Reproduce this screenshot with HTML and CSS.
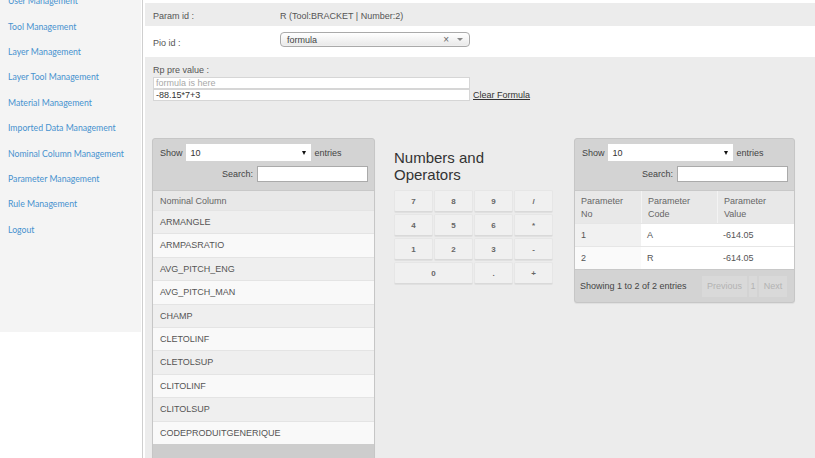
FILE: index.html
```html
<!DOCTYPE html>
<html>
<head>
<meta charset="utf-8">
<link rel="stylesheet" href="styles.css">
</head>
<body>
<div class="page">
  <aside class="sidebar">
    <ul class="nav">
      <li><a href="#">User Management</a></li>
      <li><a href="#">Tool Management</a></li>
      <li><a href="#">Layer Management</a></li>
      <li><a href="#">Layer Tool Management</a></li>
      <li><a href="#">Material Management</a></li>
      <li><a href="#">Imported Data Management</a></li>
      <li><a href="#">Nominal Column Management</a></li>
      <li><a href="#">Parameter Management</a></li>
      <li><a href="#">Rule Management</a></li>
      <li><a href="#">Logout</a></li>
    </ul>
  </aside>
  <main class="main">
    <div class="row-param">
      <span class="lbl">Param id :</span>
      <span>R (Tool:BRACKET | Number:2)</span>
    </div>
    <div class="row-pio">
      <span class="lbl pio-lbl">Pio id :</span>
      <div class="chosen">
        <span class="chosen-text">formula</span>
        <span class="chosen-x">×</span>
        <span class="chosen-arrow"></span>
      </div>
    </div>
    <div class="rp">
      <div class="rp-lbl">Rp pre value :</div>
      <div class="rp-input placeholder">formula is here</div>
      <div class="rp-line">
        <div class="rp-input">-88.15*7+3</div>
        <a href="#" class="clear">Clear Formula</a>
      </div>
    </div>
    <div class="cols">
      <section class="panel panel-left">
        <div class="dt-head">
          <div class="dt-len">
            <span>Show</span>
            <div class="dt-select"><span>10</span><span class="tri"></span></div>
            <span>entries</span>
          </div>
          <div class="dt-search">
            <span>Search:</span>
            <div class="dt-input"></div>
          </div>
        </div>
        <div class="nc-head">Nominal Column</div>
        <div class="nc-row odd">ARMANGLE</div>
        <div class="nc-row even">ARMPASRATIO</div>
        <div class="nc-row odd">AVG_PITCH_ENG</div>
        <div class="nc-row even">AVG_PITCH_MAN</div>
        <div class="nc-row odd">CHAMP</div>
        <div class="nc-row even">CLETOLINF</div>
        <div class="nc-row odd">CLETOLSUP</div>
        <div class="nc-row even">CLITOLINF</div>
        <div class="nc-row odd">CLITOLSUP</div>
        <div class="nc-row even">CODEPRODUITGENERIQUE</div>
        <div class="dt-foot"></div>
      </section>
      <section class="calc">
        <h2 class="calc-title">Numbers and<br>Operators</h2>
        <div class="keys">
          <button class="key">7</button>
          <button class="key">8</button>
          <button class="key">9</button>
          <button class="key">/</button>
          <button class="key">4</button>
          <button class="key">5</button>
          <button class="key">6</button>
          <button class="key">*</button>
          <button class="key">1</button>
          <button class="key">2</button>
          <button class="key">3</button>
          <button class="key">-</button>
          <button class="key wide">0</button>
          <button class="key">.</button>
          <button class="key">+</button>
        </div>
      </section>
      <section class="panel panel-right">
        <div class="dt-head">
          <div class="dt-len">
            <span>Show</span>
            <div class="dt-select"><span>10</span><span class="tri"></span></div>
            <span>entries</span>
          </div>
          <div class="dt-search">
            <span>Search:</span>
            <div class="dt-input"></div>
          </div>
        </div>
        <div class="pt-grid">
          <div class="pt-h">Parameter<br>No</div>
          <div class="pt-h">Parameter<br>Code</div>
          <div class="pt-h">Parameter<br>Value</div>
          <div class="pt-c sort">1</div>
          <div class="pt-c">A</div>
          <div class="pt-c">-614.05</div>
          <div class="pt-c sort2">2</div>
          <div class="pt-c">R</div>
          <div class="pt-c">-614.05</div>
        </div>
        <div class="pt-foot">
          <span>Showing 1 to 2 of 2 entries</span>
          <div class="pager">
            <span class="pg pg-prev">Previous</span>
            <span class="pg pg-num">1</span>
            <span class="pg pg-next">Next</span>
          </div>
        </div>
      </section>
    </div>
  </main>
</div>
</body>
</html>
```

FILE: styles.css
```css
* { box-sizing: border-box; }
html, body { margin: 0; padding: 0; }
body {
  background: #fff;
  font-family: "Liberation Sans", Arial, sans-serif;
  font-size: 9px;
  color: #444;
  width: 815px;
  height: 458px;
  overflow: hidden;
}
.page {
  display: flex;
  align-items: flex-start;
  height: 458px;
}
.sidebar {
  width: 141px;
  flex: 0 0 141px;
  height: 332px;
  background: #f4f4f4;
  overflow: hidden;
}
.nav {
  list-style: none;
  margin: -11.7px 0 0 0;
  padding: 0;
}
.nav li {
  height: 25.4px;
  line-height: 25.4px;
  padding-left: 8px;
}
.nav a {
  font-family: Lato, "Open Sans", sans-serif;
  font-size: 8.7px;
  color: #4792cf;
  text-decoration: none;
}
.main {
  flex: 1;
  height: 458px;
  margin-left: 1px;
  border-left: 1px solid #cfcfcf;
  padding-left: 2px;
  background: #fff;
  padding-top: 3px;
  display: flex;
  flex-direction: column;
}
.main > * { background: #ececec; }
.lbl {
  display: inline-block;
  padding-left: 8px;
  width: 135px;
  color: #555;
}
.row-param {
  height: 23px;
  padding-top: 7px;
  line-height: 12px;
  display: flex;
  color: #555;
}
.row-pio {
  background: #fff;
  height: 31px;
  display: flex;
  align-items: flex-start;
  padding-top: 6px;
}
.pio-lbl {
  padding-top: 5px;
  line-height: 12px;
}
.chosen {
  width: 190px;
  height: 15px;
  border: 1px solid #aaa;
  border-radius: 4px;
  background: linear-gradient(#ffffff 0%, #f4f4f4 50%, #e8e8e8 100%);
  display: flex;
  align-items: center;
  padding: 0 5px 0 6px;
  font-size: 9px;
  color: #444;
  box-shadow: 0 0 2px #fff inset;
}
.chosen-text { flex: 1; }
.chosen-x {
  font-size: 10px;
  color: #666;
  margin-right: 8px;
}
.chosen-arrow {
  width: 0;
  height: 0;
  border-left: 3px solid transparent;
  border-right: 3px solid transparent;
  border-top: 3px solid #888;
  margin-right: 1px;
}
.rp {
  padding: 7px 0 0 8px;
  height: 81px;
  color: #555;
}
.rp-lbl {
  line-height: 12px;
  margin-bottom: 1px;
}
.rp-input {
  width: 317px;
  height: 12px;
  border: 1px solid #d6d6d6;
  background: #fff;
  line-height: 10px;
  padding-left: 2px;
  color: #333;
}
.rp-input.placeholder { color: #a9a9a9; }
.rp-line {
  display: flex;
  align-items: flex-end;
}
.clear {
  color: #333;
  margin-left: 3px;
  line-height: 11px;
  text-decoration: underline;
}
.cols {
  flex: 1;
  display: flex;
  align-items: flex-start;
  padding-left: 7px;
  overflow: hidden;
}
.panel {
  background: #d3d3d3;
  border: 1px solid #c6c6c6;
  border-radius: 3px;
  box-shadow: 0 1px 1px rgba(0,0,0,0.06);
}
.panel-left { width: 223px; flex: 0 0 223px; }
.panel-right { width: 221px; flex: 0 0 221px; margin-left: 21px; }
.dt-head {
  padding: 5px 6px 8px 7px;
  color: #444;
}
.dt-len {
  display: flex;
  align-items: center;
  height: 17px;
}
.dt-select {
  width: 125px;
  height: 17px;
  background: #fff;
  margin: 0 4px 0 3px;
  display: flex;
  align-items: center;
  justify-content: space-between;
  padding: 0 5px 0 5px;
  color: #333;
}
.tri {
  width: 0;
  height: 0;
  border-left: 2.5px solid transparent;
  border-right: 2.5px solid transparent;
  border-top: 4px solid #111;
}
.dt-search {
  display: flex;
  justify-content: flex-end;
  align-items: center;
  margin-top: 5px;
}
.dt-input {
  width: 111px;
  height: 16px;
  background: #fff;
  border: 1px solid #aaa;
  margin-left: 4px;
}
.nc-head {
  height: 20px;
  line-height: 20px;
  padding-left: 7px;
  background: #e8e8e8;
  color: #666;
  border-top: 1px solid #c8c8c8;
}
.nc-row {
  height: 23.4px;
  line-height: 23.4px;
  padding-left: 7px;
  color: #555;
  border-top: 1px solid #e4e4e4;
}
.nc-row.odd { background: #efefef; }
.nc-row.even { background: #f9f9f9; }
.dt-foot { height: 30px; background: #cdcdcd; }
.calc {
  width: 159px;
  flex: 0 0 159px;
  margin-left: 19px;
  background: transparent;
  padding-top: 12px;
}
.calc-title {
  margin: 0 0 7px 0;
  font-weight: normal;
  font-size: 15px;
  line-height: 16.5px;
  color: #333;
}
.keys {
  display: grid;
  grid-template-columns: repeat(4, 39px);
  grid-auto-rows: 22px;
  column-gap: 1px;
  row-gap: 2px;
}
.key {
  font-family: "Liberation Sans", Arial, sans-serif;
  font-size: 8px;
  font-weight: bold;
  color: #666;
  background: #f0f0f0;
  border: 1px solid #e6e6e6;
  border-bottom: 1px solid #d9d9d9;
  border-radius: 2px;
  padding: 0;
  margin: 0;
  box-shadow: 0 1px 0 #e0e0e0;
}
.key.wide { grid-column: span 2; }
.pt-grid {
  display: grid;
  grid-template-columns: 66px 76px 77px;
  grid-template-rows: 32px 23px 23px;
  border-top: 1px solid #c8c8c8;
}
.pt-h {
  background: #e8e8e8;
  color: #666;
  line-height: 12.5px;
  padding: 4px 0 0 6px;
  border-left: 1px solid #f3f3f3;
}
.pt-h:first-child { border-left: none; }
.pt-c {
  background: #fff;
  line-height: 23px;
  padding-left: 6px;
  color: #555;
  border-top: 1px solid #e6e6e6;
}
.pt-c.sort { background: #f1f1f1; }
.pt-c.sort2 { background: #fafafa; }
.pt-foot {
  height: 33px;
  display: flex;
  align-items: center;
  justify-content: space-between;
  padding: 0 7px 0 5px;
  border-top: 1px solid #c8c8c8;
  color: #444;
}
.pager {
  display: flex;
  gap: 2px;
  margin-top: 1px;
}
.pg {
  height: 21px;
  line-height: 21px;
  background: #d9d9d9;
  color: #b3b3b3;
  text-align: center;
}
.pg-prev { width: 45px; }
.pg-num { width: 8px; }
.pg-next { width: 28px; }
```
